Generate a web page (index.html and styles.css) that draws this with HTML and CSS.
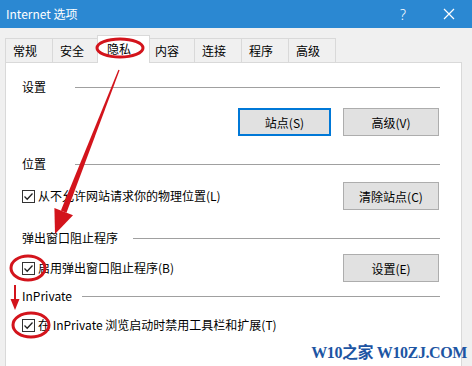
FILE: index.html
```html
<!DOCTYPE html>
<html lang="zh-CN">
<head>
<meta charset="UTF-8" />
<title>Internet 选项</title>
<link rel="stylesheet" href="styles.css">
</head>
<body>

<div class="titlebar">
  <span class="title">Internet 选项</span>
  <span class="help">?</span>
  <svg class="close" width="12" height="12" viewBox="0 0 12 12"><path d="M1 1L11 11M11 1L1 11" stroke="#fff" stroke-width="1.2"/></svg>
</div>

<div class="tabs">
  <div class="tab">常规</div>
  <div class="tab">安全</div>
  <div class="tab active">隐私</div>
  <div class="tab">内容</div>
  <div class="tab">连接</div>
  <div class="tab">程序</div>
  <div class="tab">高级</div>
</div>

<div class="panel">
  <div class="group-head"><span>设置</span><i class="rule wide"></i></div>
  <div class="row end">
    <button class="btn focus">站点(S)</button>
    <button class="btn">高级(V)</button>
  </div>

  <div class="group-head gap"><span>位置</span><i class="rule wide"></i></div>
  <div class="row loc">
    <label class="check"><svg class="box" width="13" height="13" viewBox="0 0 13 13"><rect x="0.5" y="0.5" width="12" height="12" fill="#fff" stroke="#333"/><path d="M2.5 6.5L5.2 9.2L10.5 3.5" fill="none" stroke="#222" stroke-width="1.3"/></svg>从不允许网站请求你的物理位置(L)</label>
    <button class="btn">清除站点(C)</button>
  </div>

  <div class="group-head gap"><span>弹出窗口阻止程序</span><i class="rule mid"></i></div>
  <div class="row popup">
    <label class="check"><svg class="box" width="13" height="13" viewBox="0 0 13 13"><rect x="0.5" y="0.5" width="12" height="12" fill="#fff" stroke="#333"/><path d="M2.5 6.5L5.2 9.2L10.5 3.5" fill="none" stroke="#222" stroke-width="1.3"/></svg>启用弹出窗口阻止程序(B)</label>
    <button class="btn">设置(E)</button>
  </div>

  <div class="group-head near"><span>InPrivate</span><i class="rule tight"></i></div>
  <div class="row private">
    <label class="check"><svg class="box" width="13" height="13" viewBox="0 0 13 13"><rect x="0.5" y="0.5" width="12" height="12" fill="#fff" stroke="#333"/><path d="M2.5 6.5L5.2 9.2L10.5 3.5" fill="none" stroke="#222" stroke-width="1.3"/></svg>在 InPrivate 浏览启动时禁用工具栏和扩展(T)</label>
  </div>
</div>

<!-- red annotations drawn over the dialog -->
<svg class="marks" width="472" height="366" viewBox="0 0 472 366">
  <g fill="none" stroke="#d3141c" stroke-width="3">
    <ellipse cx="120" cy="48" rx="23" ry="9"/>
    <ellipse cx="28" cy="268" rx="17" ry="12"/>
    <ellipse cx="31" cy="325" rx="18" ry="12"/>
  </g>
  <g fill="#d3141c">
    <polygon points="119.6,70.3 118.4,69.7 60.9,210.5 66.5,212.7"/>
    <polygon points="55,234 54.4,208 73,215.2"/>
    <rect x="14" y="285" width="2" height="16"/>
    <polygon points="15,310 10.5,299 19.5,299"/>
  </g>
</svg>

<div class="watermark">W10之家 W10ZJ.COM</div>

</body>
</html>
```

FILE: styles.css
```css
body {
  margin: 0;
  width: 472px;
  height: 366px;
  overflow: hidden;
  position: relative;
  background: #f0f0f0;
  font-family: "Noto Sans CJK SC", "Noto Sans", sans-serif;
  font-size: 12px;
  color: #000;
}

/* title bar */
.titlebar {
  height: 28px;
  background: #2b88d2;
  color: #fff;
  display: flex;
  align-items: center;
  padding-left: 6px;
}
.title {
  flex: 1;
  line-height: 16px;
}
.help {
  font-size: 14px;
  margin-right: 37px;
  font-family: "Noto Sans", sans-serif;
  font-weight: 300;
}
.close {
  margin-right: 17px;
}

/* tabs */
.tabs {
  display: flex;
  align-items: flex-end;
  height: 27px;
  margin-top: 7px;
  padding-left: 5px;
  position: relative;
  z-index: 1;
}
.tab {
  box-sizing: border-box;
  width: 48px;
  height: 24px;
  margin-left: -1px;
  padding-left: 7px;
  border: 1px solid #d9d9d9;
  border-bottom: none;
  background: #f0f0f0;
  line-height: 24px;
}
.tab:first-child {
  margin-left: 0;
}
.tab.active {
  width: 53px;
  height: 28px;
  margin: 0 -2px -1px -3px;
  padding-left: 9px;
  background: #fff;
  line-height: 26px;
  position: relative;
}

/* panel */
.panel {
  box-sizing: border-box;
  width: 457px;
  height: 320px;
  margin-left: 5px;
  padding: 16px 21px 0 16px;
  background: #fff;
  border: 1px solid #d9d9d9;
}
.group-head {
  display: flex;
  align-items: center;
  height: 16px;
  line-height: 16px;
}
.group-head.gap {
  margin-top: 20px;
}
.group-head.near {
  margin-top: 6px;
}
.rule {
  flex: 1;
  border-top: 1px solid #a0a0a0;
}
.rule.wide { margin-left: 29px; }
.rule.mid { margin-left: 15px; }
.rule.tight { margin-left: 10px; }

.row {
  display: flex;
  align-items: center;
  justify-content: space-between;
  height: 28px;
  margin-top: 13px;
  padding-right: 1px;
}
.row.end {
  justify-content: flex-end;
  gap: 12px;
}
.row.loc { margin-top: 10px; }
.row.popup { margin-top: 8px; }
.row.private {
  height: 16px;
  margin-top: 13px;
}

.check {
  display: flex;
  align-items: center;
  line-height: 16px;
}
.box {
  margin-right: 3px;
  flex: none;
}

.btn {
  box-sizing: border-box;
  width: 96px;
  height: 28px;
  padding: 0;
  background: #e1e1e1;
  border: 1px solid #adadad;
  font-family: inherit;
  font-size: 12px;
  color: #000;
}
.btn.focus {
  width: 93px;
  border: 2px solid #0078d7;
}

/* overlays */
.marks {
  position: absolute;
  left: 0;
  top: 0;
  z-index: 2;
}
.watermark {
  position: absolute;
  right: 5px;
  bottom: 3px;
  z-index: 3;
  font-family: "Liberation Serif", "Noto Sans CJK SC", serif;
  font-weight: bold;
  font-size: 16px;
  letter-spacing: -0.4px;
  color: #1d55a3;
}
```
